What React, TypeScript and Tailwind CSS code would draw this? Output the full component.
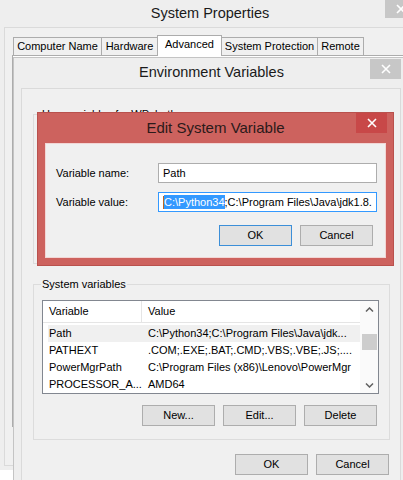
import React from "react";

function CloseX ()
{
  return (
    <svg width="10" height="10" viewBox="0 0 10 10">
      <path d="M1 1L9 9M9 1L1 9" stroke="white" strokeWidth="1.6" />
    </svg>
  );
}

function Chevron ( { down }: { down?: boolean } )
{
  return (
    <svg width="9" height="6" viewBox="0 0 9 6">
      <path d={ down ? "M1 1.5L4.5 5L8 1.5" : "M1 4.5L4.5 1L8 4.5" } stroke="#606060" strokeWidth="1.5" fill="none" />
    </svg>
  );
}

function WinButton ( { children, primary }: { children: React.ReactNode; primary?: boolean } )
{
  return (
    <div className={ `h-[21px] w-[73px] flex items-center justify-center bg-[#e1e1e1] border ${ primary ? "border-[#3c8fd8]" : "border-[#adadad]" }` }>
      { children }
    </div>
  );
}

const rows = [
  { name: "Path", value: "C:\\Python34;C:\\Program Files\\Java\\jdk...", active: true },
  { name: "PATHEXT", value: ".COM;.EXE;.BAT;.CMD;.VBS;.VBE;.JS;...." },
  { name: "PowerMgrPath", value: "C:\\Program Files (x86)\\Lenovo\\PowerMgr" },
  { name: "PROCESSOR_A...", value: "AMD64" },
];

const tabs = [
  { label: "Computer Name", w: "w-[89px]" },
  { label: "Hardware", w: "w-[57px]" },
  { label: "Advanced", w: "w-[65px]", active: true },
  { label: "System Protection", w: "w-[97px]" },
  { label: "Remote", w: "w-[47px]" },
];

export default function App ()
{
  return (
    <div className="relative w-[403px] h-[480px] overflow-hidden bg-white font-['Liberation_Sans',Arial,sans-serif] text-[11px] text-black">

      {/* System Properties window */ }
      <div className="absolute left-0 top-0 w-[416px] h-[470px] bg-[#eeeeee] flex flex-col pl-[4px]">
        <div className="h-[27px] flex items-center justify-center text-[14.5px] text-[#1a1a1a]">System Properties</div>
        <div className="absolute left-[385px] top-0 w-[31px] h-[18px] bg-[#c7c7c7] flex items-center justify-center">
          <CloseX />
        </div>
        <div className="flex-1 mb-[4px] border-l border-t border-b border-[#dadada] bg-[#f0f0f0] pl-[7px] pt-[7px]">
          <div className="flex items-end h-[20px] ml-[1px]">
            { tabs.map( ( t, i ) => (
              <div
                key={ t.label }
                className={ `${ t.w } ${ i > 0 ? "-ml-px" : "" } whitespace-nowrap flex items-center justify-center border-t border-l border-r border-[#acacac] ${ t.active ? "h-[21px] -mb-px bg-white relative z-10 pb-[3px]" : "h-[18px] bg-[#f0f0f0]" }` }
              >
                { t.label }
              </div>
            ) ) }
          </div>
          <div className="h-[372px] border border-[#acacac] bg-white"></div>
        </div>
      </div>

      {/* Environment Variables window */ }
      <div className="absolute left-[13px] top-[57px] w-[400px] h-[430px] bg-[#eeeeee] border-l border-t border-[#c4c4c4] flex flex-col">
        <div className="h-[30px] flex items-center justify-center text-[14.5px] text-[#1a1a1a] pr-[4px]">Environment Variables</div>
        <div className="absolute left-[356px] top-[1px] w-[31px] h-[20px] bg-[#c7c7c7] flex items-center justify-center">
          <CloseX />
        </div>
        <div className="ml-[7px] w-[380px] flex-1 border border-[#dadada] bg-[#f0f0f0] flex flex-col">
          {/* User variables (covered by the dialog) */ }
          <div className="relative mt-[25px] ml-[11px] w-[357px] h-[150px] border border-[#dcdcdc]">
            <span className="absolute left-[7px] top-[-9px] px-[1px] bg-[#f0f0f0] leading-[16px]">User variables for WP_bath</span>
          </div>

          {/* System variables */ }
          <div className="relative mt-[20px] ml-[11px] w-[357px] h-[156px] border border-[#dcdcdc] flex flex-col">
            <span className="absolute left-[7px] top-[-9px] px-[1px] bg-[#f0f0f0] leading-[16px]">System variables</span>
            <div className="mt-[15px] ml-[8px] w-[337px] h-[94px] border border-[#828790] bg-white flex">
              <div className="flex-1 flex flex-col">
                <div className="h-[25px] flex border-b border-[#e5e5e5]">
                  <div className="w-[99px] pl-[6px] flex items-center border-r border-[#e5e5e5]">Variable</div>
                  <div className="flex-1 pl-[6px] flex items-center">Value</div>
                </div>
                <div className="mt-[2px] pl-[5px]">
                  { rows.map( ( r ) => (
                    <div key={ r.name } className={ `h-[17px] flex items-center ${ r.active ? "bg-[#f0f0f0]" : "" }` }>
                      <div className="w-[94px] pl-[1px] whitespace-nowrap">{ r.name }</div>
                      <div className="flex-1 pl-[6px] whitespace-nowrap overflow-hidden">{ r.value }</div>
                    </div>
                  ) ) }
                </div>
              </div>
              <div className="w-[18px] bg-[#fafafa] flex flex-col items-center">
                <div className="h-[18px] flex items-center justify-center"><Chevron /></div>
                <div className="mt-[15px] w-[15px] h-[16px] bg-[#cdcdcd]"></div>
                <div className="flex-1"></div>
                <div className="h-[17px] flex items-center justify-center"><Chevron down /></div>
              </div>
            </div>
            <div className="mt-[11px] mr-[12px] flex justify-end gap-[8px]">
              <WinButton>New...</WinButton>
              <WinButton>Edit...</WinButton>
              <WinButton>Delete</WinButton>
            </div>
          </div>

          <div className="mt-[14px] mr-[11px] flex justify-end gap-[8px]">
            <WinButton>OK</WinButton>
            <WinButton>Cancel</WinButton>
          </div>
        </div>
      </div>

      {/* Edit System Variable dialog */ }
      <div className="absolute left-[37px] top-[112px] w-[357px] h-[154px] bg-[#cd625e] border border-[#b9514d] flex flex-col">
        <div className="h-[30px] flex items-center justify-center text-[15px] text-[#2b1a1a]">Edit System Variable</div>
        <div className="absolute right-[6px] top-0 w-[31px] h-[20px] bg-[#c84848] flex items-center justify-center">
          <CloseX />
        </div>
        <div className="mx-[7px] mb-[7px] flex-1 bg-[#f0f0f0] border border-[#f2d6d5] flex flex-col pt-[19px]">
          <div className="flex items-center pl-[10px]">
            <div className="w-[102px]">Variable name:</div>
            <div className="w-[219px] h-[20px] border border-[#adadad] bg-white flex items-center pl-[4px]">Path</div>
          </div>
          <div className="flex items-center pl-[10px] mt-[9px]">
            <div className="w-[102px]">Variable value:</div>
            <div className="w-[219px] h-[20px] border border-[#3399ff] bg-white flex items-center pl-[4px] overflow-hidden whitespace-nowrap">
              <span className="w-[1px] h-[13px] bg-[#c0651f]"></span>
              <span className="bg-[#3399ff] text-white leading-[14px]">C:\Python34</span>
              <span>;C:\Program Files\Java\jdk1.8.</span>
            </div>
          </div>
          <div className="mt-[13px] pr-[12px] flex justify-end gap-[8px]">
            <WinButton primary>OK</WinButton>
            <WinButton>Cancel</WinButton>
          </div>
        </div>
      </div>
    </div>
  );
}
